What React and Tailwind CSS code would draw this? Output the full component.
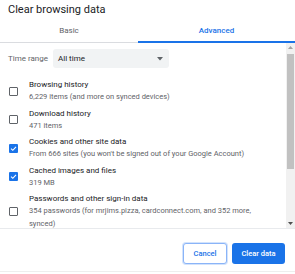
import React from 'react'

const items = [
    { label: 'Browsing history', sub: '6,229 items (and more on synced devices)', checked: false },
    { label: 'Download history', sub: '471 items', checked: false },
    { label: 'Cookies and other site data', sub: "From 666 sites (you won't be signed out of your Google Account)", checked: true },
    { label: 'Cached images and files', sub: '319 MB', checked: true },
    { label: 'Passwords and other sign-in data', sub: '354 passwords (for mrjims.pizza, cardconnect.com, and 352 more, synced)', checked: false },
]

const Checkbox = ({ checked }) =>
    checked ? (
        <span className="flex h-[9px] w-[9px] shrink-0 items-center justify-center rounded-[1px] bg-[#1a73e8]">
            <svg width="7" height="7" viewBox="0 0 10 10">
                <path d="M1.5 5.2 L4 7.6 L8.6 2.6" fill="none" stroke="#fff" strokeWidth="1.6" />
            </svg>
        </span>
    ) : (
        <span className="h-[9px] w-[9px] shrink-0 rounded-[1px] border-[1.5px] border-[#5f6368]" />
    )

export default function App() {
    return (
        <div className="flex h-[274px] w-[295px] flex-col overflow-hidden bg-white font-['Roboto',sans-serif] text-[#202124]">
            {/* Title */}
            <div className="px-[8px] pt-[3px] text-[11px] leading-[14px]">Clear browsing data</div>

            {/* Tabs */}
            <div className="mt-[3px] flex border-b border-[#dadce0]">
                <div className="flex h-[22px] w-[138px] items-center justify-center text-[8px] text-[#5f6368]">Basic</div>
                <div className="-mb-px flex h-[23px] flex-1 items-center justify-center border-b-2 border-[#1a73e8] text-[8px] font-medium text-[#1a73e8]">
                    Advanced
                </div>
            </div>

            {/* Scroll area */}
            <div className="flex h-[186px] border-b border-[#e8eaed]">
                <div className="flex-1 overflow-hidden">
                    <div className="flex items-center pl-[8px] pt-[6px]">
                        <span className="w-[45px] text-[8px] text-[#5f6368]">Time range</span>
                        <div className="flex h-[19px] w-[116px] items-center justify-between rounded-[3px] bg-[#f1f3f4] pl-[5px] pr-[6px] text-[8px]">
                            <span>All time</span>
                            <svg width="6" height="4" viewBox="0 0 6 4">
                                <path d="M0 0 H6 L3 3.5 Z" fill="#5f6368" />
                            </svg>
                        </div>
                    </div>

                    <div className="mt-[11px] flex flex-col gap-[4px] pr-[14px]">
                        {items.map(it => (
                            <div key={it.label} className="flex items-center">
                                <div className="flex w-[29px] justify-start pl-[9px]">
                                    <Checkbox checked={it.checked} />
                                </div>
                                <div className="flex-1">
                                    <div className="text-[8px] leading-[12px] text-[#202124]">{it.label}</div>
                                    <div className="text-[7.5px] leading-[12.5px] text-[#5f6368]">{it.sub}</div>
                                </div>
                            </div>
                        ))}
                    </div>
                </div>

                {/* Scrollbar */}
                <div className="flex w-[9px] flex-col items-center bg-[#f1f1f1]">
                    <svg className="mt-[3px]" width="5" height="3" viewBox="0 0 5 3">
                        <path d="M0 3 L2.5 0 L5 3 Z" fill="#a3a3a3" />
                    </svg>
                    <div className="mt-[5px] h-[115px] w-[7px] bg-[#c1c1c1]" />
                    <div className="flex-1" />
                    <svg className="mb-[3px]" width="5" height="3" viewBox="0 0 5 3">
                        <path d="M0 0 L5 0 L2.5 3 Z" fill="#505050" />
                    </svg>
                </div>
            </div>

            {/* Buttons */}
            <div className="flex justify-end gap-[5px] pr-[10px] pt-[14px]">
                <button className="h-[21px] w-[44px] rounded-[3px] border border-[#8ab4f8] bg-white text-[7.5px] font-medium text-[#1a73e8] shadow-[0_0_0_1px_#d2e3fc]">
                    Cancel
                </button>
                <button className="h-[21px] w-[53px] rounded-[3px] bg-[#1a73e8] text-[7.5px] font-medium text-white">
                    Clear data
                </button>
            </div>
            <div className="flex-1" />
            <div className="mb-[2px] h-px bg-[#eeeeee]" />
        </div>
    )
}
